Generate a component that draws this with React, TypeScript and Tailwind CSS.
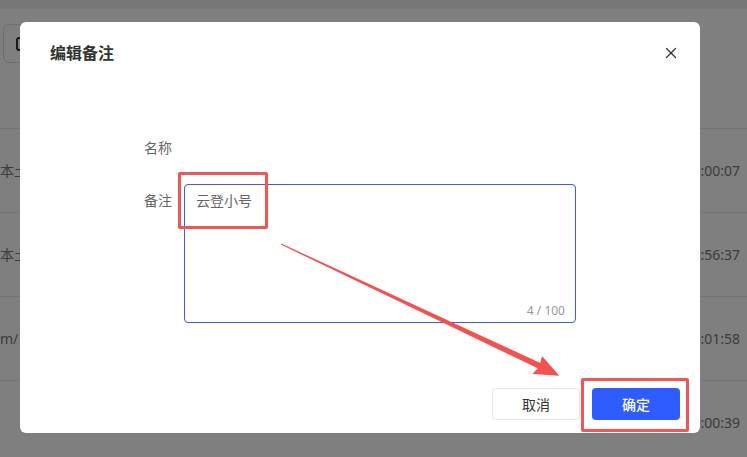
import { X } from 'lucide-react'

// Edit-remark modal over a dimmed table, with the red annotation marks on top.
const ROWS = [
  { left: '版本土', time: '2023-06-12 13:00:07' },
  { left: '版本土', time: '2023-06-12 17:56:37' },
  { left: 'm/', time: '2023-06-12 11:01:58' },
  { left: '', time: '2023-06-12 10:00:39' },
]

function Page() {
  return (
    <div className="w-full h-full bg-white">
      <div className="h-[9px] bg-[#eeeeee]" />
      <div className="h-[119px] pt-[15px] pl-[3px]">
        <div className="w-[80px] h-[39px] rounded-[6px] border border-[#dcdcdc] flex items-center pl-[12px]">
          <span className="w-[12px] h-[14px] rounded-[3px] border-2 border-[#333]" />
        </div>
      </div>
      {ROWS.map((row, i) => (
        <div
          key={i}
          className="h-[84px] border-t border-[#e8e8e8] flex items-center justify-between pr-[7px] text-[14px] text-[#777]"
        >
          <span className={row.left === 'm/' ? 'ml-0' : '-ml-[14px]'}>{row.left}</span>
          <span>{row.time}</span>
        </div>
      ))}
    </div>
  )
}

function Dialog() {
  return (
    <div className="absolute left-[20px] top-[22px] w-[680px] h-[411px] bg-white rounded-[6px] flex flex-col">
      <div className="flex items-center justify-between pl-[30px] pr-[20px] pt-[19px]">
        <h3 className="text-[16px] leading-[24px] font-semibold text-[#333]">编辑备注</h3>
        <X size={18} strokeWidth={1.7} className="text-[#333]" />
      </div>

      <div className="pl-[124px] mt-[72px] text-[14px]">
        <div className="flex leading-[22px]">
          <span className="w-[28px] text-[#666]">名称</span>
        </div>
        <div className="flex mt-[25px]">
          <span className="w-[28px] mr-[12px] pt-[6px] leading-[22px] text-[#666]">备注</span>
          <div className="relative w-[392px] h-[139px] rounded-[4px] border border-[#3a5cff] px-[11px] pt-[5px]">
            <p className="leading-[22px] text-[#666]">云登小号</p>
            <span className="absolute right-[10px] bottom-[3px] text-[12px] leading-[16px] text-[#999]">4 / 100</span>
          </div>
        </div>
      </div>

      <div className="mt-auto flex justify-end gap-[12px] pr-[20px] pb-[13px]">
        <button className="w-[88px] h-[32px] rounded-[4px] border border-[#e5e5e5] text-[14px] text-[#333]">取消</button>
        <button className="w-[88px] h-[32px] rounded-[4px] bg-[#2e5cff] text-[14px] font-medium text-white">确定</button>
      </div>
    </div>
  )
}

export default function App() {
  return (
    <div className="relative w-[747px] h-[457px] overflow-hidden font-['Noto_Sans','Noto_Sans_CJK_SC',sans-serif]">
      <Page />
      <div className="absolute inset-0 bg-black/50" />
      <Dialog />

      {/* annotation marks */}
      <div className="absolute left-[178px] top-[172px] w-[90px] h-[57px] border-[3px] border-[#f45454] rounded-[2px]" />
      <div className="absolute left-[581px] top-[378px] w-[108px] h-[54px] border-[3px] border-[#f45454] rounded-[2px]" />
      <svg className="absolute inset-0 pointer-events-none" width="747" height="457" viewBox="0 0 747 457">
        <polygon
          points="281.3,243.5 540.3,362.9 542,356 559.3,375.7 532.5,374 537.7,368.3 280.7,244.5"
          fill="#f35252"
        />
      </svg>
    </div>
  )
}
